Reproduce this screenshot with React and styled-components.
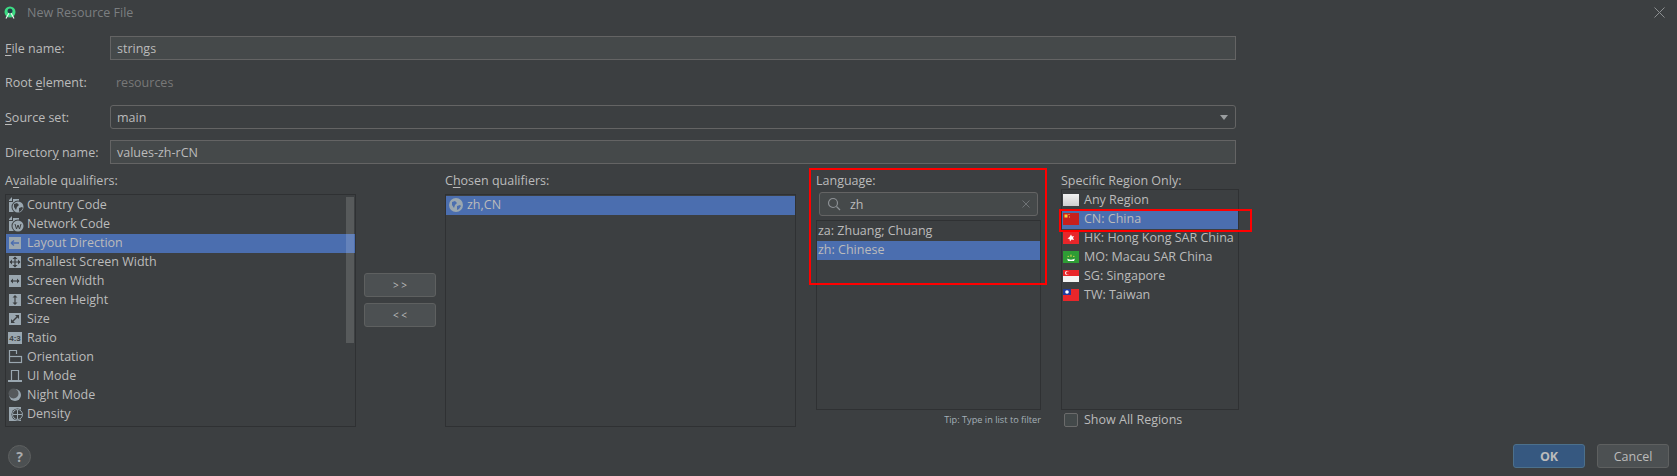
import React from "react";
import styled, { createGlobalStyle } from "styled-components";

const GlobalStyle = createGlobalStyle`
  html, body {
    margin: 0;
    padding: 0;
    background: #3c3f41;
  }
  * {
    box-sizing: border-box;
  }
`;

const Dialog = styled.div`
  width: 1677px;
  height: 476px;
  overflow: hidden;
  background: #3c3f41;
  color: #bbbbbb;
  font-family: "Open Sans", "Noto Sans", sans-serif;
  font-size: 12.5px;
  line-height: 17px;
`;

const TitleBar = styled.div`
  height: 24px;
  padding: 0 12px 0 4px;
  display: flex;
  align-items: center;
  color: #7b7e80;
`;

const TitleText = styled.span`
  margin-left: 11px;
  flex: 1;
`;

const Form = styled.div`
  padding: 12px 5px 0;
`;

const FieldRow = styled.div`
  display: flex;
  align-items: center;
  height: ${(p) => p.$height || 24}px;
  margin-bottom: 11px;
`;

const FieldLabel = styled.label`
  width: 105px;
  flex: none;
`;

const Mnemonic = styled.u`
  text-underline-offset: 2px;
`;

const TextField = styled.div`
  width: 1126px;
  height: 24px;
  padding: 0 6px;
  display: flex;
  align-items: center;
  background: #45494a;
  border: 1px solid #646464;
`;

const StaticValue = styled.span`
  padding-left: 6px;
  color: #787878;
`;

const Combo = styled(TextField)`
  justify-content: space-between;
  background: #3c3f41;
  border-radius: 3px;
  padding-right: 6px;
`;

const ComboArrow = styled.span`
  width: 0;
  height: 0;
  border-left: 4px solid transparent;
  border-right: 4px solid transparent;
  border-top: 5px solid #9a9d9f;
  margin-right: 1px;
`;

const Columns = styled.div`
  display: grid;
  grid-template-columns: 351px 72px 352px 237px 190px;
  column-gap: 8px;
  height: 255px;
  margin-top: -3px;
`;

const Column = styled.div`
  position: relative;
  display: flex;
  flex-direction: column;
  min-width: 0;
  padding-left: ${(p) => p.$shift || 0}px;
`;

const ColumnLabel = styled.div`
  height: 17px;
  margin-bottom: ${(p) => p.$gap ?? 5}px;
`;

const ListBox = styled.div`
  position: relative;
  height: ${(p) => p.$height}px;
  padding-top: 1px;
  overflow: hidden;
  border: 1px solid #2f3133;
`;

const Row = styled.div`
  height: 19px;
  padding-bottom: 2px;
  display: flex;
  align-items: center;
  gap: ${(p) => p.$gap ?? 3}px;
  padding-left: ${(p) => p.$indent ?? 2}px;
  white-space: nowrap;
  background: ${(p) => (p.$selected ? "#4b6eaf" : "transparent")};
`;

const ScrollThumb = styled.div`
  position: absolute;
  top: 2px;
  right: 1px;
  width: 8px;
  height: 146px;
  background: rgba(255, 255, 255, 0.14);
`;

const MoveButtons = styled.div`
  display: flex;
  flex-direction: column;
  gap: 6px;
  padding-top: 101px;
`;

const Button = styled.button`
  height: 24px;
  width: 72px;
  padding: 0;
  font-family: inherit;
  font-size: ${(p) => p.$size || 12.5}px;
  font-weight: ${(p) => (p.$primary ? 700 : 400)};
  color: #bbbbbb;
  background: ${(p) => (p.$primary ? "#365880" : "#4c5052")};
  border: 1px solid ${(p) => (p.$primary ? "#4c708c" : "#5e6060")};
  border-radius: 3px;
`;

const SearchBox = styled.div`
  width: 219px;
  height: 24px;
  margin: 0 0 4px 3px;
  padding: 0 7px;
  display: flex;
  align-items: center;
  gap: 9px;
  background: #45494a;
  border: 1px solid #646464;
  border-radius: 3px;
`;

const SearchValue = styled.span`
  flex: 1;
`;

const Tip = styled.div`
  margin-top: 3px;
  font-size: 9.2px;
  line-height: 14px;
  text-align: right;
  color: #a4b0b8;
`;

const CheckRow = styled.div`
  display: flex;
  align-items: center;
  gap: 6px;
  margin: 1px 0 0 3px;
`;

const CheckBox = styled.span`
  width: 14px;
  height: 14px;
  background: #43494a;
  border: 1px solid #6b6b6b;
  border-radius: 2px;
`;

const RedFrame = styled.div`
  position: absolute;
  top: ${(p) => p.$top}px;
  left: ${(p) => p.$left}px;
  width: ${(p) => p.$width}px;
  height: ${(p) => p.$height}px;
  border: 2px solid #ff0000;
  pointer-events: none;
`;

const Footer = styled.div`
  margin-top: 17px;
  padding: 0 8px;
  display: flex;
  align-items: center;
`;

const HelpButton = styled.div`
  width: 23px;
  height: 23px;
  display: flex;
  align-items: center;
  justify-content: center;
  font-size: 14px;
  font-weight: 700;
  color: #a9abad;
  background: #4c5052;
  border: 1px solid #5e6060;
  border-radius: 50%;
`;

const FooterActions = styled.div`
  margin-left: auto;
  display: flex;
  gap: 12px;
`;

const TILE = "#9aa7b0";
const BG = "#3c3f41";

const Glyph = ({ children }) => (
  <svg width="16" height="16" viewBox="0 0 16 16" style={{ flex: "none" }}>
    {children}
  </svg>
);

const Tile = ({ children }) => (
  <Glyph>
    <rect x="1" y="2" width="12" height="12" fill={TILE} />
    {children}
  </Glyph>
);

const GlobeMark = ({ cx = 10, cy = 10, r = 5.5 }) => (
  <>
    <circle cx={cx} cy={cy} r={r + 1} fill={BG} opacity={r > 6 ? 0 : 1} />
    <circle cx={cx} cy={cy} r={r} fill={TILE} />
    <path
      d={`M${cx - 4} ${cy - 3}l3-1 2 2-2 2-1 3-2-3zM${cx + 1} ${cy + 1}l3-1 1 1-2 3-2 1z`}
      fill={r > 6 ? "#4b6eaf" : BG}
    />
  </>
);

const icons = {
  country: (
    <Glyph>
      <path d="M1 3l3-3v4H1z M5 2h6v5H5z M1 5h8v10H1z" fill={TILE} />
      <GlobeMark />
    </Glyph>
  ),
  network: (
    <Glyph>
      <path d="M1 3l3-3v4H1z M5 2h6v5H5z M1 5h8v10H1z" fill={TILE} />
      <circle cx="10" cy="10" r="6.5" fill={BG} />
      <circle cx="10" cy="10" r="5.5" fill={TILE} />
      <path d="M7 8l1.5 5L10 9l1.5 4L13 8" fill="none" stroke={BG} />
    </Glyph>
  ),
  layout: (
    <Tile>
      <path d="M3 8h8M3 8l3-2.5M3 8l3 2.5" stroke="#4b6eaf" strokeWidth="1.4" fill="none" />
    </Tile>
  ),
  smallest: (
    <Tile>
      <path d="M7 3v10M2 8h10" stroke={BG} strokeWidth="1.2" />
      <path d="M7 2.5l2.5 2.5h-5zM7 13.5l2.5-2.5h-5zM1.5 8L4 5.5v5zM12.5 8L10 5.5v5z" fill={BG} />
    </Tile>
  ),
  width: (
    <Tile>
      <path d="M3 8h8" stroke={BG} strokeWidth="1.2" />
      <path d="M2.5 8L5 5.5v5zM11.5 8L9 5.5v5z" fill={BG} />
    </Tile>
  ),
  height: (
    <Tile>
      <path d="M7 4v8" stroke={BG} strokeWidth="1.2" />
      <path d="M7 3L9.5 5.5h-5zM7 13l2.500-2.500h-5z" fill={BG} />
    </Tile>
  ),
  size: (
    <Tile>
      <path d="M4 11l6-6" stroke={BG} strokeWidth="1.4" />
      <path d="M11 4v4l-4-4zM3 12V8l4 4z" fill={BG} />
    </Tile>
  ),
  ratio: (
    <Glyph>
      <rect x="0" y="2" width="14" height="12" fill={TILE} />
      <text x="7" y="11" textAnchor="middle" fontSize="8" fontWeight="700" fontFamily="Liberation Sans, sans-serif" fill={BG}>
        4:3
      </text>
    </Glyph>
  ),
  orientation: (
    <Glyph>
      <path d="M1.500 7V1.500h7V5" fill="none" stroke={TILE} strokeWidth="1.2" />
      <rect x="1.500" y="7.500" width="12" height="6" fill="none" stroke={TILE} strokeWidth="1.2" />
    </Glyph>
  ),
  ui: (
    <Glyph>
      <path d="M3.500 12V2.500h7V12" fill="none" stroke={TILE} strokeWidth="1.2" />
      <rect x="0" y="12" width="14" height="2" fill={TILE} />
    </Glyph>
  ),
  night: (
    <Glyph>
      <circle cx="7" cy="8" r="6" fill={TILE} />
      <circle cx="5.500" cy="6.500" r="5" fill="#55595c" />
    </Glyph>
  ),
  density: (
    <Glyph>
      <rect x="1" y="1" width="12" height="14" fill={TILE} />
      <circle cx="9.500" cy="8.500" r="6" fill={BG} />
      <circle cx="9.500" cy="8.500" r="5" fill="none" stroke={TILE} />
      <path d="M9.500 4v9M5 8.500h9" stroke={TILE} />
    </Glyph>
  ),
  touch: <Tile />,
};

const qualifiers = [
  ["country", "Country Code"],
  ["network", "Network Code"],
  ["layout", "Layout Direction", true],
  ["smallest", "Smallest Screen Width"],
  ["width", "Screen Width"],
  ["height", "Screen Height"],
  ["size", "Size"],
  ["ratio", "Ratio"],
  ["orientation", "Orientation"],
  ["ui", "UI Mode"],
  ["night", "Night Mode"],
  ["density", "Density"],
  ["touch", ""],
];

const flags = {
  any: (
    <Glyph>
      <defs>
        <linearGradient id="anyFlag" x1="0" y1="0" x2="0" y2="1">
          <stop offset="0" stopColor="#f2f2f2" />
          <stop offset="1" stopColor="#cfcfcf" />
        </linearGradient>
      </defs>
      <rect x="0" y="2" width="16" height="12" fill="url(#anyFlag)" />
    </Glyph>
  ),
  cn: (
    <Glyph>
      <rect x="0" y="2" width="16" height="12" fill="#c8201c" />
      <rect x="1.500" y="3.500" width="3" height="3" fill="#f6d23a" />
      <rect x="5.500" y="3" width="1" height="1" fill="#f6d23a" />
      <rect x="6" y="5.500" width="1" height="1" fill="#f6d23a" />
    </Glyph>
  ),
  hk: (
    <Glyph>
      <rect x="0" y="2" width="16" height="12" fill="#e8262a" />
      <path d="M8 4.500l1 2 2-.5-1 2 1 2-2.500-.5L7 11.500 6.500 9l-2-.5 2-1.500z" fill="#ffffff" />
    </Glyph>
  ),
  mo: (
    <Glyph>
      <rect x="0" y="2" width="16" height="12" fill="#2e9c35" />
      <path d="M4 9.500c2 1.500 6 1.500 8 0l-1 2.500H5z" fill="#ffffff" />
      <path d="M8 5l.8 2.500H7.200zM5 6.500l1 1.500H4.500zM11 6.500l.5 1.500H10z" fill="#ffe04a" />
    </Glyph>
  ),
  sg: (
    <Glyph>
      <rect x="0" y="2" width="16" height="6" fill="#e8262a" />
      <rect x="0" y="8" width="16" height="6" fill="#f4f4f4" />
      <circle cx="4" cy="5" r="2" fill="#ffffff" />
      <circle cx="4.800" cy="5" r="1.700" fill="#e8262a" />
    </Glyph>
  ),
  tw: (
    <Glyph>
      <rect x="0" y="2" width="16" height="12" fill="#e8262a" />
      <rect x="0" y="2" width="8" height="6" fill="#1f3a9e" />
      <circle cx="4" cy="5" r="1.800" fill="#ffffff" />
    </Glyph>
  ),
};

const regions = [
  ["any", "Any Region"],
  ["cn", "CN: China", true],
  ["hk", "HK: Hong Kong SAR China"],
  ["mo", "MO: Macau SAR China"],
  ["sg", "SG: Singapore"],
  ["tw", "TW: Taiwan"],
];

const App = () => (
  <Dialog>
    <GlobalStyle />
    <TitleBar>
      <svg width="12" height="13" viewBox="0 0 12 13">
        <circle cx="6" cy="6" r="5.500" fill="#3ddc84" />
        <circle cx="6" cy="5" r="2.500" fill="#24404a" />
        <path d="M5 7L2 12.500M7 7l3 5.500" stroke="#e8f5ee" strokeWidth="1.200" />
      </svg>
      <TitleText>New Resource File</TitleText>
      <svg width="11" height="11" viewBox="0 0 11 11">
        <path d="M.5 .5l10 10M10.500 .5l-10 10" stroke="#8c8f91" fill="none" />
      </svg>
    </TitleBar>
    <Form>
      <FieldRow>
        <FieldLabel>
          <Mnemonic>F</Mnemonic>ile name:
        </FieldLabel>
        <TextField>strings</TextField>
      </FieldRow>
      <FieldRow $height={23}>
        <FieldLabel>
          Root <Mnemonic>e</Mnemonic>lement:
        </FieldLabel>
        <StaticValue>resources</StaticValue>
      </FieldRow>
      <FieldRow>
        <FieldLabel>
          <Mnemonic>S</Mnemonic>ource set:
        </FieldLabel>
        <Combo>
          main
          <ComboArrow />
        </Combo>
      </FieldRow>
      <FieldRow>
        <FieldLabel>
          Director<Mnemonic>y</Mnemonic> name:
        </FieldLabel>
        <TextField>values-zh-rCN</TextField>
      </FieldRow>
      <Columns>
        <Column>
          <ColumnLabel>
            A<Mnemonic>v</Mnemonic>ailable qualifiers:
          </ColumnLabel>
          <ListBox $height={233}>
            {qualifiers.map(([key, label, selected]) => (
              <Row key={key} $selected={selected}>
                {icons[key]}
                {label}
              </Row>
            ))}
            <ScrollThumb />
          </ListBox>
        </Column>
        <MoveButtons>
          <Button $size={10}>&gt; &gt;</Button>
          <Button $size={10}>&lt; &lt;</Button>
        </MoveButtons>
        <Column $shift={1}>
          <ColumnLabel>
            C<Mnemonic>h</Mnemonic>osen qualifiers:
          </ColumnLabel>
          <ListBox $height={233}>
            <Row $selected>
              <Glyph>
                <GlobeMark cx={8} cy={8} r={7} />
              </Glyph>
              zh,CN
            </Row>
          </ListBox>
        </Column>
        <Column $shift={12}>
          <ColumnLabel $gap={3}>Language:</ColumnLabel>
          <SearchBox>
            <svg width="14" height="14" viewBox="0 0 14 14">
              <circle cx="6" cy="6" r="4.500" fill="none" stroke="#8c9094" strokeWidth="1.200" />
              <path d="M9.500 9.500L13 13" stroke="#8c9094" strokeWidth="1.200" />
            </svg>
            <SearchValue>zh</SearchValue>
            <svg width="8" height="8" viewBox="0 0 8 8">
              <path d="M.5 .5l7 7M7.500 .5l-7 7" stroke="#6f7376" fill="none" />
            </svg>
          </SearchBox>
          <ListBox $height={190}>
            <Row $indent={1}>za: Zhuang; Chuang</Row>
            <Row $indent={1} $selected>zh: Chinese</Row>
          </ListBox>
          <Tip>Tip: Type in list to filter</Tip>
          <RedFrame $top={-4} $left={5} $width={238} $height={117} />
        </Column>
        <Column $shift={12}>
          <ColumnLabel $gap={0}>Specific Region Only:</ColumnLabel>
          <ListBox $height={221}>
            {regions.map(([key, label, selected]) => (
              <Row key={key} $indent={1} $gap={5} $selected={selected}>
                {flags[key]}
                {label}
              </Row>
            ))}
          </ListBox>
          <CheckRow>
            <CheckBox />
            Show All Regions
          </CheckRow>
          <RedFrame $top={37} $left={10} $width={193} $height={23} />
        </Column>
      </Columns>
    </Form>
    <Footer>
      <HelpButton>?</HelpButton>
      <FooterActions>
        <Button $primary>OK</Button>
        <Button>Cancel</Button>
      </FooterActions>
    </Footer>
  </Dialog>
);

export default App;
